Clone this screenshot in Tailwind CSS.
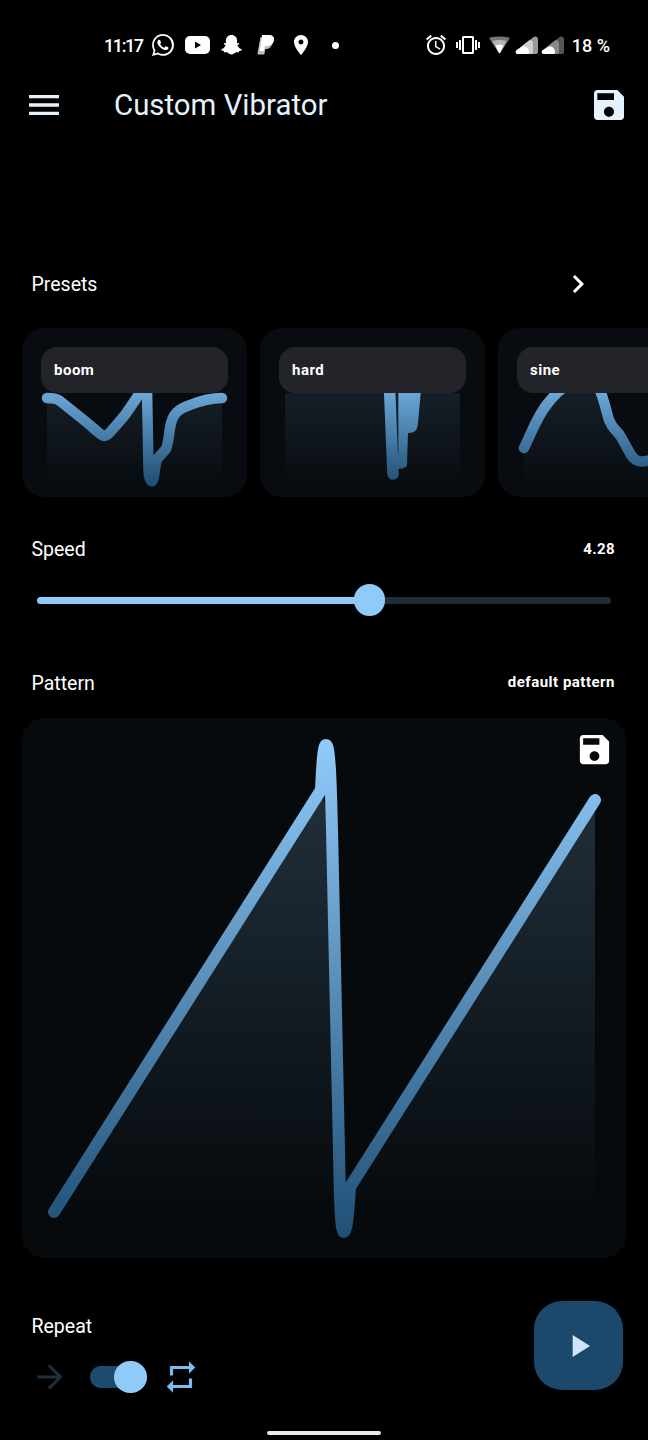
<!DOCTYPE html>
<html lang="en">
<head>
    <meta charset="UTF-8" />
    <meta name="viewport" content="width=device-width, initial-scale=1.0" />
    <script src="https://cdn.jsdelivr.net/npm/@tailwindcss/browser@4"></script>
    <title>Custom Vibrator</title>
</head>
<body class="bg-black">
    <div class="w-[648px] h-[1440px] overflow-hidden bg-black text-white font-['Roboto',sans-serif]">

        <!-- status bar -->
        <div class="h-[90px] flex items-center pl-[104px] pr-[38px]">
            <span class="text-[18px] font-medium tracking-[-1.4px] w-[38px] whitespace-nowrap">11:17</span>
            <svg class="w-[22px] h-[22px] ml-[10px] fill-white" viewBox="0 0 24 24"><path d="M17.472 14.382c-.297-.149-1.758-.867-2.15-.966-.353-.111-.5-.149-.732.15-.198.297-.768.966-.94 1.164-.173.199-.347.223-.644.075-.297-.15-1.255-.463-2.39-1.475-.883-.788-1.48-1.761-1.653-2.059-.173-.297-.018-.458.13-.606.134-.133.298-.347.446-.52.149-.174.198-.298.298-.497.099-.198.05-.371-.025-.52-.075-.149-.669-1.612-.916-2.207-.242-.579-.487-.5-.669-.51-.173-.008-.371-.01-.57-.01-.198 0-.52.074-.792.372-.272.297-1.04 1.016-1.04 2.479 0 1.462 1.065 2.875 1.213 3.074.149.198 2.096 3.2 5.077 4.487.709.306 1.262.489 1.694.625.712.227 1.36.195 1.871.118.571-.085 1.758-.719 2.006-1.413.248-.694.248-1.289.173-1.413-.074-.124-.272-.198-.57-.347m-5.421 7.403h-.004a9.87 9.87 0 01-5.031-1.378l-.361-.214-3.741.982.998-3.648-.235-.374a9.86 9.86 0 01-1.51-5.26c.001-5.45 4.436-9.884 9.888-9.884 2.64 0 5.122 1.03 6.988 2.898a9.825 9.825 0 012.893 6.994c-.003 5.45-4.437 9.884-9.885 9.884m8.413-18.297A11.815 11.815 0 0012.05 0C5.495 0 .16 5.335.157 11.892c0 2.096.547 4.142 1.588 5.945L.057 24l6.305-1.654a11.882 11.882 0 005.683 1.448h.005c6.554 0 11.89-5.335 11.893-11.893a11.821 11.821 0 00-3.48-8.413z"/></svg>
            <svg class="w-[25px] h-[18px] ml-[11px]" viewBox="0 0 25 18"><rect width="25" height="18" rx="5" fill="#fff"/><path d="M10 5.5v7l6-3.5z" fill="#000"/></svg>
            <svg class="w-[23px] h-[22px] ml-[10px] fill-white" viewBox="0 0 22 22"><path d="M11 1c3.6 0 5.6 2.6 5.6 5.6 0 1 0 1.8-.1 2.5.7.4 1.6-.4 2.1.2.5.8-.9 1.3-1.7 1.7.3 1.6 2 3.4 4 4.2.6.3.4 1-.2 1.2-.7.3-1.6.3-2 .7-.2.5-.2 1.2-.7 1.3-.9.1-1.8-.3-2.9.1-1.2.5-2.1 2-4.1 2s-2.9-1.5-4.1-2c-1.1-.4-2-.1-2.9-.1-.5-.1-.5-.8-.7-1.3-.4-.4-1.300-.4-2-.7-.6-.2-.8-.9-.2-1.200 2-.8 3.700-2.600 4-4.200-.8-.4-2.200-.9-1.700-1.700.5-.6 1.400.2 2.100-.2-.1-.7-.1-1.500-.1-2.500C5.400 3.600 7.400 1 11 1z"/></svg>
            <svg class="w-[20px] h-[22px] ml-[13px] fill-white" viewBox="0 0 20 22"><path d="M6 1h7c3.500 0 5.500 2 5 5-.5 3.800-3 6-6.500 6H9l-1 5H3.500z"/><path d="M1.500 19.500 4.500 3 6 4 3.800 17H7l1-5h3c2.500 0 4.200-1 5.200-2.500-.7 3.600-3 5.500-6.200 5.500H9.200l-.9 5.500H1.500z" opacity=".75"/></svg>
            <svg class="w-[24px] h-[24px] ml-[13px] fill-white" viewBox="0 0 24 24"><path d="M12 2C8.130 2 5 5.130 5 9c0 5.250 7 13 7 13s7-7.750 7-13c0-3.870-3.130-7-7-7zm0 9.500c-1.380 0-2.500-1.120-2.500-2.500s1.120-2.500 2.500-2.500 2.500 1.120 2.500 2.500-1.120 2.500-2.500 2.500z"/></svg>
            <span class="w-[7px] h-[7px] ml-[19px] rounded-full bg-white"></span>

            <svg class="w-[24px] h-[24px] ml-[85px] fill-white" viewBox="0 0 24 24"><path d="M22 5.720l-4.600-3.860-1.290 1.530 4.600 3.860L22 5.720zM7.880 3.390L6.600 1.860 2 5.710l1.290 1.530 4.590-3.850zM12.500 8H11v6l4.750 2.850.75-1.230-4-2.370V8zM12 4c-4.970 0-9 4.030-9 9s4.030 9 9 9c4.970 0 9-4.030 9-9s-4.030-9-9-9zm0 16c-3.870 0-7-3.130-7-7s3.130-7 7-7c3.870 0 7 3.130 7 7s-3.130 7-7 7z"/></svg>
            <svg class="w-[24px] h-[24px] ml-[8px] fill-white" viewBox="0 0 24 24"><path d="M0 15h2V9H0v6zm3 2h2V7H3v10zm19-8v6h2V9h-2zm-3 8h2V7h-2v10zM16.500 3h-9C6.670 3 6 3.670 6 4.500v15c0 .830.670 1.500 1.500 1.500h9c.830 0 1.500-.670 1.500-1.500v-15c0-.830-.670-1.500-1.500-1.500zM16 19H8V5h8v14z"/></svg>
            <svg class="w-[21px] h-[18px] ml-[9px]" viewBox="0 0 21 18"><path d="M1 1.500C7 0 14 0 20 1.500c.6.200.8.800.4 1.300L11.300 17c-.4.600-1.200.6-1.600 0L.6 2.800C.2 2.300.4 1.700 1 1.500z" fill="#777"/><path d="M3.500 5C8 3.500 13 3.500 17.500 5L11.200 16.500c-.4.500-1 .5-1.400 0z" fill="#b5b5b5"/><path d="M6.500 9.500C8.500 8.500 12.500 8.500 14.500 9.500L11.200 16.500c-.4.500-1 .5-1.400 0z" fill="#fff"/></svg>
            <svg class="w-[23px] h-[18px] ml-[5px]" viewBox="0 0 23 18"><path d="M19 .8C21 -.2 23 .8 23 3V16C23 17.200 22 18 21 18H3C.5 18 0 15 2 14z" fill="#999"/><path d="M14 4.500 2 14C0 15 .5 18 3 18H16.500C17.500 18 18 17.200 18 16V7.500C18 4.500 16 3.500 14 4.500z" fill="#d0d0d0"/><path d="M3 18C.5 18 0 15 2 14L7 11C10 9.500 13.500 11.500 14 15.500C14.200 17 13.500 18 12.500 18Z" fill="#fff"/></svg>
            <svg class="w-[23px] h-[18px] ml-[3px]" viewBox="0 0 23 18"><path d="M19 .8C21 -.2 23 .8 23 3V16C23 17.200 22 18 21 18H3C.5 18 0 15 2 14z" fill="#555"/><path d="M14 4.500 2 14C0 15 .5 18 3 18H16.500C17.500 18 18 17.200 18 16V7.500C18 4.500 16 3.500 14 4.500z" fill="#8a8a8a"/><path d="M3 18C.5 18 0 15 2 14L7 11C10 9.500 13.500 11.500 14 15.500C14.200 17 13.500 18 12.500 18Z" fill="#fff"/></svg>
            <span class="ml-auto text-[18px] font-medium whitespace-nowrap">18 %</span>
        </div>

        <!-- app bar -->
        <div class="h-[30px] flex items-center px-[24px] text-[#e3f2fd]">
            <svg class="w-[40px] h-[40px] shrink-0 fill-[#e3f2fd]" viewBox="0 0 24 24"><path d="M3 18h18v-2H3v2zm0-5h18v-2H3v2zm0-7v2h18V6H3z"/></svg>
            <h1 class="ml-[50px] mt-[1px] text-[29.4px] font-normal whitespace-nowrap">Custom Vibrator</h1>
            <svg class="w-[40px] h-[40px] shrink-0 ml-auto -mr-[5px] fill-[#e3f2fd]" viewBox="0 0 24 24"><path d="M17 3H5c-1.110 0-2 .9-2 2v14c0 1.100.890 2 2 2h14c1.100 0 2-.9 2-2V7l-4-4zm-5 16c-1.660 0-3-1.340-3-3s1.340-3 3-3 3 1.340 3 3-1.340 3-3 3zm3-10H5V5h10v4z"/></svg>
        </div>

        <!-- presets -->
        <div class="mt-[149px] h-[30px] flex items-center pl-[31.5px] pr-[52px] justify-between">
            <span class="text-[19.5px] mt-[1px]">Presets</span>
            <svg class="w-[36px] h-[36px] fill-white" viewBox="0 0 24 24"><path d="M8.590 16.590L13.170 12 8.590 7.410 10 6l6 6-6 6z"/></svg>
        </div>
        <div class="mt-[29px] h-[169px] flex gap-[13px] pl-[22px] overflow-hidden">
            <div class="relative w-[225px] h-[169px] shrink-0 rounded-[22px] bg-[#080c10] overflow-hidden">
                <svg class="w-[225px] h-[169px]" viewBox="22 328 225 169">
                    <defs>
                        <linearGradient id="lineA" gradientUnits="userSpaceOnUse" x1="0" y1="393" x2="0" y2="484"><stop offset="0" stop-color="#6ba6d6"/><stop offset="1" stop-color="#1f4f75"/></linearGradient>
                        <linearGradient id="fillA" gradientUnits="userSpaceOnUse" x1="0" y1="393" x2="0" y2="484"><stop offset="0" stop-color="#90caf9" stop-opacity=".1"/><stop offset="1" stop-color="#90caf9" stop-opacity="0"/></linearGradient>
                    </defs>
                    <path d="M47 398L57 399 65 405 85 421 100 435 104 436 112 430 125 415 140 393 146 393 148 470 152 483 155 470 157 458 168 448 170 430 173 418 180 408 195 403 210 399 222 398V480H47z" fill="url(#fillA)"/>
                    <path d="M47 398C52 398 56 398 60 401L85 421C95 429 100 435 104 436C108 436 112 430 125 415L140 393M147 388L148.500 470C149 482 153 485 154 476C155 470 155 463 158 458L166 449C168 445 169 435 170 428C172 414 178 409 190 405C200 401 212 398 222 398" fill="none" stroke="url(#lineA)" stroke-width="10.500" stroke-linecap="round" stroke-linejoin="round"/>
                </svg>
                <div class="absolute left-[19px] top-[19px] w-[187px] h-[46px] rounded-[16px] bg-[#222429] flex items-center pl-[13px] text-[15px] font-bold tracking-[0.5px]">boom</div>
            </div>
            <div class="relative w-[225px] h-[169px] shrink-0 rounded-[22px] bg-[#080c10] overflow-hidden">
                <svg class="w-[225px] h-[169px]" viewBox="260 328 225 169">
                    <path d="M285 393H460V484H285z" fill="url(#fillA)"/>
                    <path d="M389.500 388L393 474" fill="none" stroke="url(#lineA)" stroke-width="11.500" stroke-linecap="round" stroke-linejoin="round"/>
                    <path d="M398.300 393H420.700L418 423C417.500 431 414 433 408 433L407 465C406.500 468 402 469 396 469V454L398.300 454Z" fill="url(#lineA)"/>
                </svg>
                <div class="absolute left-[19px] top-[19px] w-[187px] h-[46px] rounded-[16px] bg-[#222429] flex items-center pl-[13px] text-[15px] font-bold tracking-[0.5px]">hard</div>
            </div>
            <div class="relative w-[225px] h-[169px] shrink-0 rounded-[22px] bg-[#080c10] overflow-hidden">
                <svg class="w-[225px] h-[169px]" viewBox="497 328 225 169">
                    <path d="M523 448C530 434 536 416 547 403C555 393 590 380 600 393L608 420C612 430 616 430 620 437L630 455C635 463 642 463 650 458V484H523z" fill="url(#fillA)"/>
                    <path d="M523 448C530 434 536 416 547 403C555 393 560 388 566 386M597 386C602 395 605 410 608 420C612 430 616 430 620 437L630 455C635 463 642 463 655 458" fill="none" stroke="url(#lineA)" stroke-width="10.500" stroke-linecap="round" stroke-linejoin="round"/>
                </svg>
                <div class="absolute left-[19px] top-[19px] w-[187px] h-[46px] rounded-[16px] bg-[#222429] flex items-center pl-[13px] text-[15px] font-bold tracking-[0.5px]">sine</div>
            </div>
        </div>

        <!-- speed -->
        <div class="mt-[37px] h-[30px] flex items-center justify-between pl-[31.5px] pr-[33px]">
            <span class="text-[19.5px] mt-[2px]">Speed</span>
            <span class="text-[15px] font-bold tracking-[0.4px]">4.28</span>
        </div>
        <div class="mt-[20px] h-[32px] mx-[37px] relative flex items-center">
            <div class="h-[7px] w-[333px] rounded-l-full bg-[#90caf9]"></div>
            <div class="h-[7px] flex-1 rounded-r-full bg-[#1f2d39]"></div>
            <div class="absolute left-[317px] top-0 w-[31px] h-[32px] rounded-full bg-[#90caf9]"></div>
        </div>

        <!-- pattern -->
        <div class="mt-[52px] h-[30px] flex items-center justify-between pl-[31.5px] pr-[33px]">
            <span class="text-[19.5px] mt-[2px]">Pattern</span>
            <span class="text-[15px] font-bold tracking-[0.5px] -mt-[1px]">default pattern</span>
        </div>
        <div class="mt-[20px] mx-[22px] h-[540px] relative rounded-[22px] bg-[#060a0d] overflow-hidden">
            <svg class="w-[604px] h-[540px]" viewBox="22 718 604 540">
                <defs>
                    <linearGradient id="lineB" gradientUnits="userSpaceOnUse" x1="0" y1="745" x2="0" y2="1237"><stop offset="0" stop-color="#90caf9"/><stop offset="1" stop-color="#1f4f75"/></linearGradient>
                    <linearGradient id="fillB" gradientUnits="userSpaceOnUse" x1="0" y1="780" x2="0" y2="1210"><stop offset="0" stop-color="#90caf9" stop-opacity=".2"/><stop offset="1" stop-color="#90caf9" stop-opacity="0"/></linearGradient>
                </defs>
                <path d="M54 1212L321 790 332 830 344 1232 350 1187 595 800V1232H54z" fill="url(#fillB)"/>
                <path d="M54 1212L321 790C322 770 323 745 326 745C330 745 331 790 332 830L339 1150C340 1210 341 1232 344 1232C347 1232 349 1205 350 1187L595 800" fill="none" stroke="url(#lineB)" stroke-width="12" stroke-linecap="round" stroke-linejoin="round"/>
            </svg>
            <svg class="absolute left-[553px] top-[12px] w-[39px] h-[39px] fill-white" viewBox="0 0 24 24"><path d="M17 3H5c-1.110 0-2 .9-2 2v14c0 1.100.890 2 2 2h14c1.100 0 2-.9 2-2V7l-4-4zm-5 16c-1.660 0-3-1.340-3-3s1.340-3 3-3 3 1.340 3 3-1.340 3-3 3zm3-10H5V5h10v4z"/></svg>
        </div>

        <!-- repeat + play -->
        <div class="mt-[43px] h-[96px] flex justify-between pl-[31.5px] pr-[25px]">
            <div class="pt-[10px]">
                <div class="h-[30px] flex items-center text-[19.5px] pt-[2px]">Repeat</div>
                <div class="mt-[16px] h-[40px] flex items-center">
                    <svg class="w-[38px] h-[38px] -ml-[1px] fill-[#1e2f3c]" viewBox="0 0 24 24"><path d="M12 4l-1.410 1.410L16.170 11H4v2h12.170l-5.580 5.590L12 20l8-8z"/></svg>
                    <div class="relative ml-[21px] w-[57px] h-[32px] flex items-center">
                        <div class="w-[40px] h-[22px] rounded-full bg-[#1d4b6e]"></div>
                        <div class="absolute right-0 top-0 w-[33px] h-[32px] rounded-full bg-[#90caf9]"></div>
                    </div>
                    <svg class="w-[38px] h-[38px] ml-[15px] fill-[#7cbcf0]" viewBox="0 0 24 24"><path d="M7 7h10v3l4-4-4-4v3H5v6h2V7zm10 10H7v-3l-4 4 4 4v-3h12v-6h-2v4z"/></svg>
                </div>
            </div>
            <div class="w-[89px] h-[89px] rounded-[28px] bg-[#1b486b] flex items-center justify-center">
                <svg class="w-[38px] h-[38px] fill-[#cfe5fb]" viewBox="0 0 24 24"><path d="M8 5v14l11-7z"/></svg>
            </div>
        </div>

        <!-- home indicator -->
        <div class="mt-[34px] mx-auto w-[114px] h-[4px] rounded-full bg-[#e8e8e8]"></div>
    </div>
</body>
</html>
